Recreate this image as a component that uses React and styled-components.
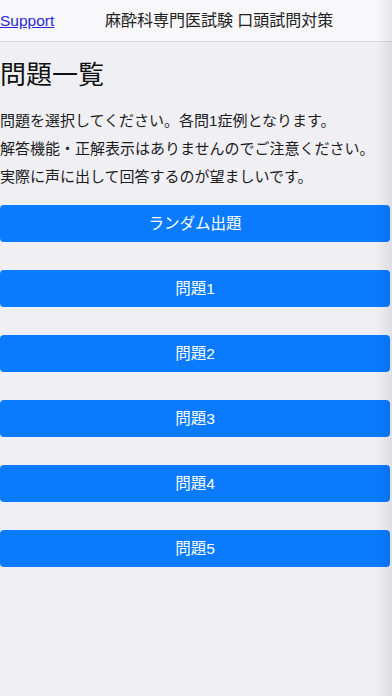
import React from 'react';
import styled, { createGlobalStyle } from 'styled-components';

const GlobalStyle = createGlobalStyle`
  html, body {
    margin: 0;
    padding: 0;
    background: #efeff4;
  }
  body {
    font-family: "Liberation Sans", "Noto Sans CJK JP", sans-serif;
    color: #1c1c1e;
  }
`;

const Page = styled.div`
  min-height: 696px;
  background: #efeff4;
  position: relative;

  &::after {
    content: '';
    position: fixed;
    top: 0;
    right: 0;
    width: 16px;
    height: 100%;
    background: linear-gradient(to right, rgba(0, 0, 0, 0), rgba(0, 0, 0, 0.07));
    pointer-events: none;
  }
`;

const Header = styled.header`
  height: 41px;
  display: flex;
  align-items: center;
  background: #f8f7fa;
  border-bottom: 1px solid #d8d8dc;
`;

const SupportLink = styled.a`
  font-size: 15.5px;
  color: #2a2ad0;
  text-decoration: underline;
  line-height: 20px;
`;

const Title = styled.div`
  flex: 1;
  text-align: center;
  font-size: 16px;
  line-height: 20px;
  color: #222;
  padding-right: 8px;
`;

const Main = styled.main`
  padding: 18px 0 0;
`;

const Heading = styled.h1`
  margin: 0;
  font-size: 26px;
  font-weight: 400;
  line-height: 31px;
  color: #111;
`;

const Lead = styled.p`
  margin: 16px 0 14px;
  font-size: 15px;
  line-height: 28px;
  color: #1c1c1e;
`;

const ButtonList = styled.div`
  display: flex;
  flex-direction: column;
  gap: 28px;
  padding-right: 2px;
`;

const QuestionButton = styled.button`
  height: 37px;
  width: 100%;
  border: none;
  border-radius: 4px;
  background: #0a7bff;
  color: #fff;
  font-family: inherit;
  font-size: 15.5px;
  line-height: 20px;
  cursor: pointer;
`;

const items = ['ランダム出題', '問題1', '問題2', '問題3', '問題4', '問題5'];

const App = () => {
  return (
    <>
      <GlobalStyle />
      <Page>
        <Header>
          <SupportLink href="#">Support</SupportLink>
          <Title>麻酔科専門医試験 口頭試問対策</Title>
        </Header>
        <Main>
          <Heading>問題一覧</Heading>
          <Lead>
            問題を選択してください。各問1症例となります。<br />
            解答機能・正解表示はありませんのでご注意ください。<br />
            実際に声に出して回答するのが望ましいです。
          </Lead>
          <ButtonList>
            {items.map((item, index) => (
              <QuestionButton key={index}>{item}</QuestionButton>
            ))}
          </ButtonList>
        </Main>
      </Page>
    </>
  );
};

export default App;
